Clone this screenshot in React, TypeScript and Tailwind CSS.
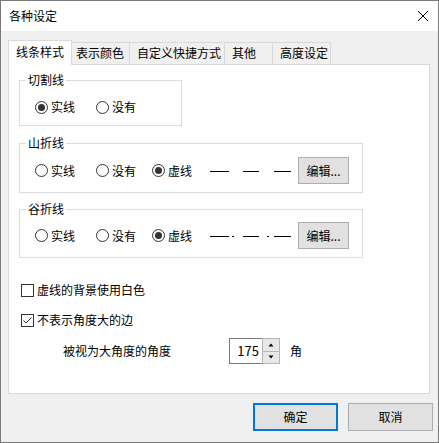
import type { ReactNode } from "react";

const font = {
  fontFamily: '"Noto Sans CJK SC", "Noto Sans", sans-serif',
};

const Radio = ({ label, checked, width }: { label: string; checked?: boolean; width?: string }) => (
  <label className={`flex items-center gap-[3px] h-4 ${width ?? ""}`}>
    <span className="flex h-[13px] w-[13px] items-center justify-center rounded-full border border-[#333333] bg-white">
      {checked && <span className="h-[7px] w-[7px] rounded-full bg-[#333333]" />}
    </span>
    <span>{label}</span>
  </label>
);

const Checkbox = ({ label, checked }: { label: string; checked?: boolean }) => (
  <label className="flex items-center gap-[3px] h-4">
    <span className="flex h-[13px] w-[13px] items-center justify-center border border-[#333333] bg-white">
      {checked && (
        <svg width="11" height="11" viewBox="0 0 11 11">
          <path d="M1.5 5.5 L4 8 L9.5 2.5" fill="none" stroke="#333333" strokeWidth="1" />
        </svg>
      )}
    </span>
    <span>{label}</span>
  </label>
);

const Group = ({ title, width, className, children }: { title: string; width: string; className?: string; children: ReactNode }) => (
  <fieldset className={`border border-[#dcdcdc] ${width} ${className ?? ""}`}>
    <legend className="ml-[6px] px-[2px] leading-4">{title}</legend>
    {children}
  </fieldset>
);

const EditButton = () => (
  <button className="ml-[7px] h-[27px] w-[51px] border border-[#adadad] bg-[#e1e1e1] text-xs leading-4">
    编辑...
  </button>
);

const Dashes = ({ dots }: { dots?: boolean }) => (
  <svg width="81" height="3" viewBox="0 0 81 3" className="mt-[1px]">
    <g stroke="#000" strokeWidth="1">
      <line x1="0" y1="1.5" x2="19" y2="1.5" />
      <line x1="33" y1="1.5" x2="49" y2="1.5" />
      <line x1="64" y1="1.5" x2="81" y2="1.5" />
      {dots && (
        <>
          <line x1="22" y1="1.5" x2="24" y2="1.5" />
          <line x1="57" y1="1.5" x2="59" y2="1.5" />
        </>
      )}
    </g>
  </svg>
);

const tabs = [
  { name: "表示颜色", cls: "w-[58px] pl-[4px]" },
  { name: "自定义快捷方式", cls: "w-[95px] pl-[7px]" },
  { name: "其他", cls: "w-[48px] pl-[7px]" },
  { name: "高度设定", cls: "w-[58px] pl-[7px]" },
];

export default function App() {
  return (
    <div
      className="flex h-[443px] w-[439px] flex-col border border-[#7a7a7a] bg-[#f0f0f0] text-xs leading-4 text-black"
      style={font}
    >
      {/* title bar */}
      <div className="flex h-[30px] items-center justify-between bg-white pl-[8px] pr-[10px]">
        <span>各种设定</span>
        <svg width="10" height="10" viewBox="0 0 10 10">
          <path d="M0 0 L10 10 M10 0 L0 10" stroke="#000" strokeWidth="1" />
        </svg>
      </div>

      <div className="flex flex-col pl-[7px] pr-[7px] pt-[9px]">
        {/* tabs */}
        <div className="-mb-px flex h-[25px] items-end">
          <div className="relative z-10 flex h-[25px] w-[64px] items-center border border-b-0 border-[#d9d9d9] bg-white pl-[7px] pb-[2px]">
            线条样式
          </div>
          {tabs.map((t) => (
            <div
              key={t.name}
              className={`flex h-[23px] items-center border-t border-r border-[#d9d9d9] bg-[#f0f0f0] pb-[2px] ${t.cls}`}
            >
              {t.name}
            </div>
          ))}
        </div>

        {/* panel */}
        <div className="relative flex h-[330px] w-[422px] flex-col border border-[#d9d9d9] bg-white pl-[10px] pt-[7px]">
          <Group title="切割线" width="w-[163px]">
            <div className="flex items-center pl-[15px] pt-[11px] pb-[10px]">
              <Radio label="实线" checked width="w-[61px]" />
              <Radio label="没有" />
            </div>
          </Group>

          <Group title="山折线" width="w-[344px]" className="mt-[9px]">
            <div className="flex h-[41px] items-center pl-[15px] pt-[6px] pb-[8px]">
              <Radio label="实线" width="w-[61px]" />
              <Radio label="没有" width="w-[56px]" />
              <Radio label="虚线" checked width="w-[58px]" />
              <Dashes />
              <EditButton />
            </div>
          </Group>

          <Group title="谷折线" width="w-[344px]" className="mt-[8px]">
            <div className="flex h-[40px] items-center pl-[15px] pt-[5px] pb-[8px]">
              <Radio label="实线" width="w-[61px]" />
              <Radio label="没有" width="w-[56px]" />
              <Radio label="虚线" checked width="w-[58px]" />
              <Dashes dots />
              <EditButton />
            </div>
          </Group>

          <div className="ml-[2px] mt-[24px]">
            <Checkbox label="虚线的背景使用白色" />
          </div>
          <div className="ml-[2px] mt-[14px]">
            <Checkbox label="不表示角度大的边" checked />
          </div>

          <div className="mt-[10px] flex h-[26px] items-center pl-[44px]">
            <span className="w-[166px]">被视为大角度的角度</span>
            <div className="flex h-[26px]">
              <div className="flex w-[33px] items-center justify-end border border-r-0 border-[#7a7a7a] pr-[3px] text-[13px]">
                175
              </div>
              <div className="flex w-[18px] flex-col border border-[#b5b5b5] bg-[#f0f0f0]">
                <div className="flex flex-1 items-center justify-center border-b border-[#b5b5b5] bg-[#e8e8e8]">
                  <svg width="6" height="4" viewBox="0 0 6 4">
                    <path d="M3 0.5 L5.5 3.5 L0.5 3.5 Z" fill="#000" />
                  </svg>
                </div>
                <div className="flex flex-1 items-center justify-center bg-[#e8e8e8]">
                  <svg width="6" height="4" viewBox="0 0 6 4">
                    <path d="M0.5 0.5 L5.5 0.5 L3 3.5 Z" fill="#000" />
                  </svg>
                </div>
              </div>
            </div>
            <span className="ml-[10px]">角</span>
          </div>
        </div>

        {/* buttons */}
        <div className="mt-[9px] flex justify-end gap-[10px] -mr-[2px]">
          <button className="h-[28px] w-[85px] border-2 border-[#0078d7] bg-[#e1e1e1]">确定</button>
          <button className="h-[28px] w-[85px] border border-[#adadad] bg-[#e1e1e1]">取消</button>
        </div>
      </div>
    </div>
  );
}
